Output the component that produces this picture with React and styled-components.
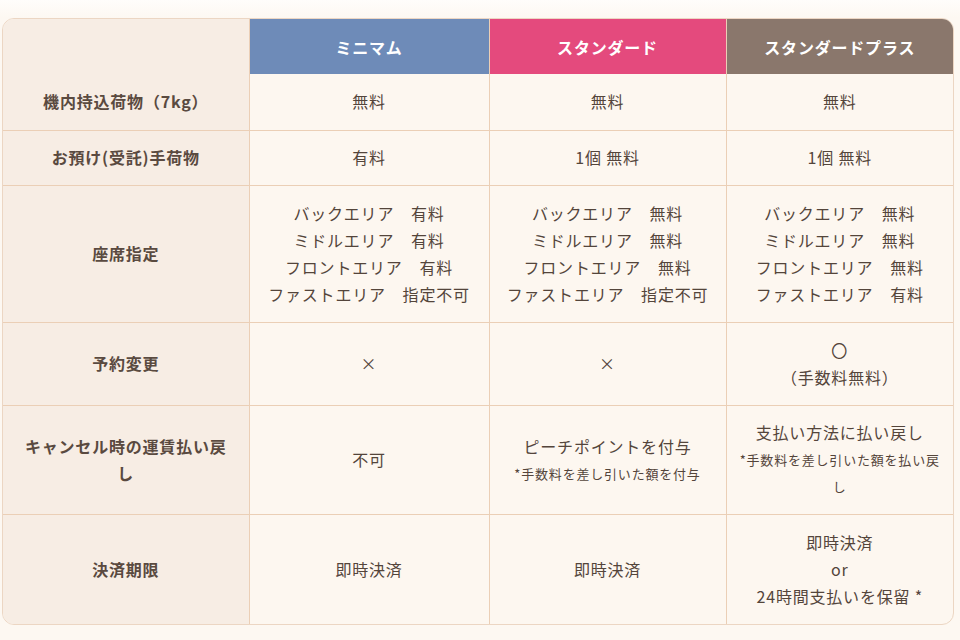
import React from "react";
import styled, { createGlobalStyle } from "styled-components";

const GlobalStyle = createGlobalStyle`
  html, body {
    margin: 0;
    padding: 0;
    background: #fdf8f2;
  }
  body {
    font-family: "Noto Sans CJK JP", "Noto Sans", sans-serif;
    color: #54453b;
  }
`;

const Page = styled.div`
  width: 960px;
  height: 640px;
  padding: 18px 0 0 2px;
  box-sizing: border-box;
  background: linear-gradient(#fffdfb 0px, #fdf8f2 18px);
`;

const Frame = styled.div`
  width: 952px;
  border: 1px solid #ecd6c3;
  border-radius: 12px;
  overflow: hidden;
  box-sizing: border-box;
  background: #fdf7f0;
`;

const Table = styled.table`
  width: 100%;
  border-collapse: collapse;
  table-layout: fixed;
  letter-spacing: 0.05em;

  tr + tr > * {
    border-top: 1px solid #ebcfb6;
  }
  th + th,
  th + td,
  td + td {
    border-left: 1px solid #ebcfb6;
  }
`;

const Row = styled.tr`
  height: ${(p) => p.$h}px;
`;

const HeadCell = styled.th`
  background: ${(p) => p.$bg || "#f7ede4"};
  color: #fff;
  font-size: 16px;
  font-weight: 700;
  text-align: center;
  padding: 0;
`;

const Label = styled.th`
  background: #f7ede4;
  color: #5a4a40;
  font-size: 16px;
  font-weight: 700;
  line-height: 27px;
  text-align: center;
  padding: 0 16px;
`;

const Cell = styled.td`
  font-size: 16px;
  font-weight: 400;
  line-height: 27px;
  text-align: center;
  vertical-align: middle;
  padding: 0 10px;
`;

const Line = styled.div`
  white-space: pre;
`;

const Note = styled.div`
  font-size: 13px;
  line-height: 27px;
`;

const plans = [
  { name: "ミニマム", bg: "#6e8bb8" },
  { name: "スタンダード", bg: "#e44a7d" },
  { name: "スタンダードプラス", bg: "#8a776c" },
];

const seats = {
  minimum: ["バックエリア　有料", "ミドルエリア　有料", "フロントエリア　有料", "ファストエリア　指定不可"],
  standard: ["バックエリア　無料", "ミドルエリア　無料", "フロントエリア　無料", "ファストエリア　指定不可"],
  plus: ["バックエリア　無料", "ミドルエリア　無料", "フロントエリア　無料", "ファストエリア　有料"],
};

const Lines = ({ items }) => items.map((t) => <Line key={t}>{t}</Line>);

export default function App() {
  return (
    <>
      <GlobalStyle />
      <Page>
        <Frame>
          <Table>
            <colgroup>
              <col style={{ width: 246 }} />
              <col style={{ width: 240 }} />
              <col style={{ width: 237 }} />
              <col />
            </colgroup>
            <thead>
              <Row $h={55}>
                <HeadCell />
                {plans.map((p) => (
                  <HeadCell key={p.name} $bg={p.bg}>
                    {p.name}
                  </HeadCell>
                ))}
              </Row>
            </thead>
            <tbody>
              <Row $h={56}>
                <Label>機内持込荷物（7kg）</Label>
                <Cell>無料</Cell>
                <Cell>無料</Cell>
                <Cell>無料</Cell>
              </Row>
              <Row $h={55}>
                <Label>お預け(受託)手荷物</Label>
                <Cell>有料</Cell>
                <Cell>1個 無料</Cell>
                <Cell>1個 無料</Cell>
              </Row>
              <Row $h={137}>
                <Label>座席指定</Label>
                <Cell><Lines items={seats.minimum} /></Cell>
                <Cell><Lines items={seats.standard} /></Cell>
                <Cell><Lines items={seats.plus} /></Cell>
              </Row>
              <Row $h={83}>
                <Label>予約変更</Label>
                <Cell>×</Cell>
                <Cell>×</Cell>
                <Cell>
                  <Line>〇</Line>
                  <Line>（手数料無料）</Line>
                </Cell>
              </Row>
              <Row $h={109}>
                <Label>キャンセル時の運賃払い戻し</Label>
                <Cell>不可</Cell>
                <Cell>
                  <div>ピーチポイントを付与</div>
                  <Note>*手数料を差し引いた額を付与</Note>
                </Cell>
                <Cell>
                  <div>支払い方法に払い戻し</div>
                  <Note>*手数料を差し引いた額を払い戻し</Note>
                </Cell>
              </Row>
              <Row $h={110}>
                <Label>決済期限</Label>
                <Cell>即時決済</Cell>
                <Cell>即時決済</Cell>
                <Cell>
                  <div>即時決済</div>
                  <div>or</div>
                  <div>24時間支払いを保留 *</div>
                </Cell>
              </Row>
            </tbody>
          </Table>
        </Frame>
      </Page>
    </>
  );
}
